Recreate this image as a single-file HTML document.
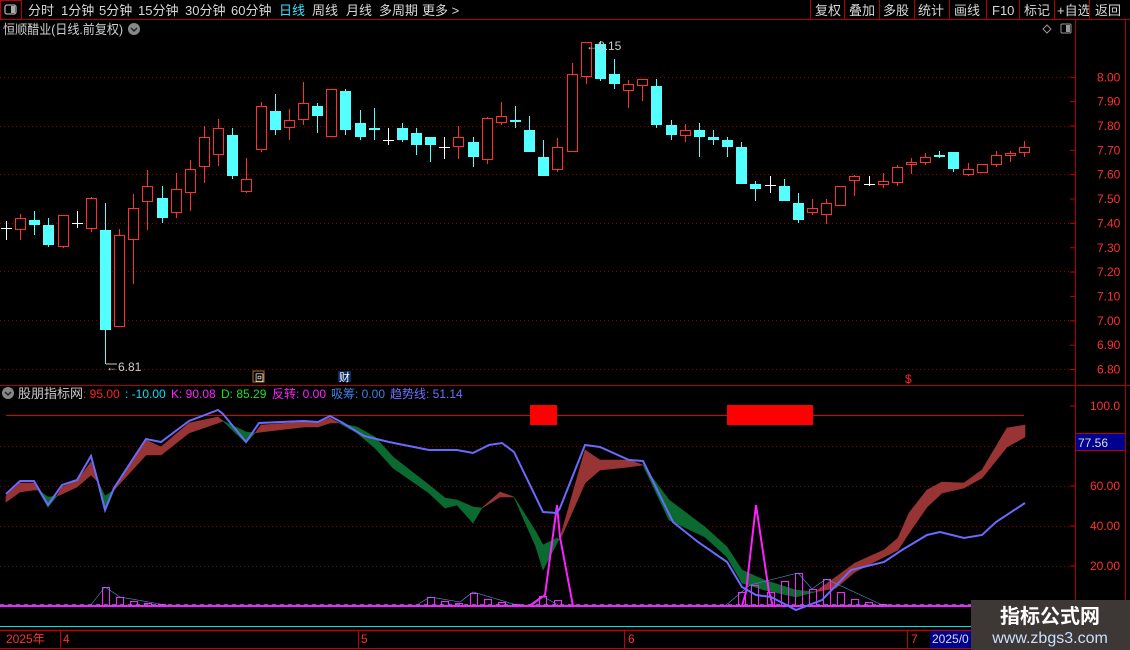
<!DOCTYPE html>
<html><head><meta charset="utf-8"><style>
body{margin:0;width:1130px;height:650px;background:#000;overflow:hidden;font-family:"Liberation Sans","Noto Sans CJK SC",sans-serif;}
svg{position:absolute;left:0;top:0}
.t{font-family:"Liberation Sans","Noto Sans CJK SC",sans-serif;}
</style></head><body>
<svg id="s" width="1130" height="650" xmlns="http://www.w3.org/2000/svg">
<rect width="1130" height="650" fill="#000"/>
<line x1="0" y1="19.5" x2="1130" y2="19.5" stroke="#b00000"/>
<rect x="0.5" y="0.5" width="21" height="19" fill="none" stroke="#c00000"/>
<rect x="5" y="5" width="11" height="9" rx="2" fill="none" stroke="#aaa" stroke-width="1.3"/><rect x="11" y="6" width="4" height="7" fill="#aaa"/>
<g class="t" font-size="13" fill="#d8d8d8">
<text x="28" y="15">分时</text><text x="61" y="15">1分钟</text><text x="99" y="15">5分钟</text><text x="138" y="15">15分钟</text><text x="185" y="15">30分钟</text><text x="231" y="15">60分钟</text>
<text x="279" y="15" fill="#40e0ff">日线</text><text x="312" y="15">周线</text><text x="346" y="15">月线</text><text x="379" y="15">多周期</text><text x="422" y="15">更多 &gt;</text>
<text x="815" y="15">复权</text><text x="849" y="15">叠加</text><text x="883" y="15">多股</text><text x="918" y="15">统计</text><text x="954" y="15">画线</text><text x="992" y="15">F10</text><text x="1024" y="15">标记</text><text x="1057" y="15">+自选</text><text x="1095" y="15">返回</text>
</g>
<g stroke="#b00000"><line x1="810.5" y1="0" x2="810.5" y2="19"/><line x1="844.5" y1="0" x2="844.5" y2="19"/><line x1="879.5" y1="0" x2="879.5" y2="19"/><line x1="914.5" y1="0" x2="914.5" y2="19"/><line x1="949.5" y1="0" x2="949.5" y2="19"/><line x1="986.5" y1="0" x2="986.5" y2="19"/><line x1="1019.5" y1="0" x2="1019.5" y2="19"/><line x1="1054.5" y1="0" x2="1054.5" y2="19"/><line x1="1089.5" y1="0" x2="1089.5" y2="19"/>
<line x1="1075.5" y1="19" x2="1075.5" y2="630"/><line x1="1125.5" y1="19" x2="1125.5" y2="630"/>
<line x1="0" y1="385.5" x2="1075" y2="385.5"/><line x1="1075" y1="385.5" x2="1130" y2="385.5"/>
</g>
<text x="3" y="34" class="t" font-size="13" fill="#d0d0d0" textLength="120" lengthAdjust="spacingAndGlyphs">恒顺醋业(日线.前复权)</text>
<circle cx="134" cy="29" r="6" fill="#888"/><path d="M131 28l3 3 3-3" stroke="#222" fill="none" stroke-width="1.5"/>
<path d="M1047 25l4 4-4 4-4-4z" fill="none" stroke="#999"/>
<rect x="1061" y="24" width="10" height="9" rx="1" fill="none" stroke="#999"/><rect x="1066" y="25" width="4" height="7" fill="#999"/>
<g id="grid" stroke="#8a0000" stroke-dasharray="1 3"></g>
<g id="axis" class="t" font-size="12" fill="#ff3030"></g>
<g id="candles"></g>
<text x="586" y="50" class="t" font-size="12" fill="#ccc">←8.15</text>
<line x1="106" y1="364" x2="117" y2="364" stroke="#ccc"/><text x="106" y="371" class="t" font-size="12" fill="#ccc">←6.81</text>
<rect x="253" y="371" width="11" height="11" fill="#000" stroke="#c07020"/><text x="255" y="381" font-size="9" fill="#fff">回</text>
<rect x="338" y="371" width="13" height="11" fill="#0a2a60"/><text x="339" y="381" class="t" font-size="11" fill="#fff">财</text>
<text x="905" y="383" class="t" font-size="12" fill="#ff2020">$</text>
<circle cx="8" cy="393" r="6" fill="#888"/><path d="M5 392l3 3 3-3" stroke="#222" fill="none" stroke-width="1.5"/>
<text y="398" class="t" font-size="12"><tspan x="18" fill="#ccc" font-size="13">股朋指标网</tspan><tspan x="83" fill="#ff2020">: 95.00</tspan><tspan x="125" fill="#00e0ff">: -10.00</tspan><tspan x="171" fill="#ff20ff">K: 90.08</tspan><tspan x="221" fill="#20e020">D: 85.29</tspan><tspan x="272" fill="#ff20ff">反转: 0.00</tspan><tspan x="331" fill="#4080e0">吸筹: 0.00</tspan><tspan x="390" fill="#7070ff">趋势线: 51.14</tspan></text>
<g id="ind"></g>
<rect x="1076" y="434" width="49" height="16" fill="#000090"/>
<line x1="1076" y1="433.5" x2="1125" y2="433.5" stroke="#c00000"/><line x1="1076" y1="450.5" x2="1125" y2="450.5" stroke="#c00000"/>
<text x="1078" y="447" class="t" font-size="12" fill="#ddd">77.56</text>
<line x1="0" y1="626.5" x2="1075" y2="626.5" stroke="#00e0e0"/>
<line x1="0" y1="630.5" x2="1130" y2="630.5" stroke="#c00000" stroke-width="1.5"/>
<line x1="0" y1="648.5" x2="1130" y2="648.5" stroke="#c00000"/>
<g stroke="#c00000"><line x1="60.5" y1="630" x2="60.5" y2="648"/><line x1="358.5" y1="630" x2="358.5" y2="648"/><line x1="624.5" y1="630" x2="624.5" y2="648"/><line x1="907.5" y1="630" x2="907.5" y2="648"/></g>
<g class="t" font-size="12" fill="#ff3030"><text x="6" y="643">2025年</text><text x="63" y="643">4</text><text x="361" y="643">5</text><text x="628" y="643">6</text><text x="911" y="643">7</text></g>
<rect x="930" y="631" width="45" height="17" fill="#000090"/><text x="932" y="643" class="t" font-size="12" fill="#ddd">2025/0</text>
<rect x="971" y="600" width="159" height="50" fill="#3d3735"/>
<text x="1050" y="623" text-anchor="middle" class="t" font-size="20" font-weight="bold" fill="#fff">指标公式网</text>
<text x="1050" y="643" text-anchor="middle" class="t" font-size="16" fill="#c8e0ff">www.zbgs3.com</text>
</svg>
<script>
var NS="http://www.w3.org/2000/svg";
function el(p,t,a){var e=document.createElementNS(NS,t);for(var k in a)e.setAttribute(k,a[k]);document.getElementById(p).appendChild(e);return e;}
[77,126,174,223,271,320,369].forEach(function(y){el("grid","line",{x1:0,y1:y+.5,x2:1075,y2:y+.5});});
[446,486,526,566].forEach(function(y){el("grid","line",{x1:0,y1:y+.5,x2:1075,y2:y+.5});});
var labs=["8.00","7.90","7.80","7.70","7.60","7.50","7.40","7.30","7.20","7.10","7.00","6.90","6.80"];
labs.forEach(function(l,i){var y=77.3+i*24.35;el("axis","line",{x1:1070,y1:y,x2:1076,y2:y,stroke:"#c00000"});var t=el("axis","text",{x:1097,y:y+4});t.textContent=l;});
[[406,"100.0"],[486,"60.00"],[526,"40.00"],[566,"20.00"]].forEach(function(a){el("axis","line",{x1:1070,y1:a[0],x2:1076,y2:a[0],stroke:"#c00000"});var t=el("axis","text",{x:1090,y:a[0]+4});t.textContent=a[1];});
var C=[["w",228,228,221,240],["r",218,230,214,240],["c",220,225,211,235],["c",225,245,218,247],["r",215,247,215,248],["w",223,223,211,228],["r",198,229,197,232],["c",230,330,203,364],["r",235,327,229,327],["r",208,240,194,284],["r",186,202,170,230],["c",198,218,186,223],["r",189,213,173,218],["r",169,193,160,211],["r",137,167,126,183],["r",128,155,119,166],["c",135,176,128,179],["r",179,192,158,193],["r",106,150,102,152],["c",111,130,94,135],["r",120,128,109,140],["r",103,120,82,125],["c",106,116,103,133],["r",89,137,89,137],["c",91,130,89,135],["c",123,137,110,140],["c",128,130,108,140],["w",140,140,128,145],["c",128,140,123,142],["c",133,145,128,155],["c",137,145,137,162],["w",147,147,137,159],["r",137,147,126,159],["c",142,157,137,167],["r",118,160,117,164],["r",116,123,102,125],["c",120,122,106,128],["c",130,152,116,152],["c",157,176,140,176],["r",147,170,138,172],["r",74,152,63,152],["r",42,77,42,84],["c",44,79,41,81],["c",74,84,59,89],["r",84,91,80,108],["r",79,86,79,101],["c",86,125,79,128],["c",125,135,120,140],["r",130,136,124,142],["c",130,137,123,157],["c",137,140,130,145],["c",140,147,137,157],["c",147,184,142,184],["c",184,189,181,201],["w",185,185,176,193],["c",186,201,179,201],["c",203,220,193,223],["r",208,213,199,215],["r",203,215,199,224],["r",186,206,186,206],["r",176,181,175,196],["w",184,184,176,186],["r",181,185,173,188],["r",167,183,165,186],["r",162,165,158,174],["r",157,163,153,165],["c",155,157,151,158],["c",152,169,152,172],["r",169,175,163,176],["r",164,173,164,173],["r",155,165,151,167],["r",153,156,151,162],["r",147,153,141,157]];
C.forEach(function(c,i){var x=Math.round(6+i*14.14);var col=c[0]=="r"?"#ff3030":c[0]=="c"?"#54ffff":"#ffffff";
el("candles","line",{x1:x+.5,y1:c[3],x2:x+.5,y2:c[4],stroke:col});
if(c[0]=="w"){el("candles","line",{x1:x-5,y1:c[1]+.5,x2:x+6,y2:c[1]+.5,stroke:col});}
else if(c[0]=="c"){el("candles","rect",{x:x-5,y:c[1],width:11,height:Math.max(2,c[2]-c[1]),fill:col});}
else{el("candles","rect",{x:x-4.5,y:c[1]+.5,width:10,height:Math.max(1,c[2]-c[1]-1),fill:"#000",stroke:col});}
});
el("ind","line",{x1:6,y1:415.5,x2:1024,y2:415.5,stroke:"#e00000"});
el("ind","rect",{x:530,y:405,width:27,height:20,fill:"#ff0000"});
el("ind","rect",{x:727,y:405,width:86,height:20,fill:"#ff0000"});
var B=[[6,496,502],[20,483,492],[34,483,490],[38,490,490],[48,507,497],[57,496,496],[62,487,494],[77,481,487],[91,462,475],[98,482,482],[105,512,496],[114,490,490],[146,440,455],[161,447,455],[189,423,433],[218,417,423],[223,421,421],[246,443,432],[255,433,433],[261,425,432],[304,422,427],[318,423,427],[330,418,423],[339,423,423],[357,433,427],[375,448,437],[393,468,457],[429,493,485],[445,508,498],[457,505,500],[473,523,507],[482,508,508],[500,492,497],[514,497,497],[536,547,532],[543,570,545],[557,543,538],[560,538,540],[585,450,483],[600,460,470],[629,460,467],[643,465,465],[669,520,500],[705,537,527],[727,557,547],[742,583,570],[764,590,580],[796,597,590],[815,592,592],[836,577,588],[855,563,572],[884,550,557],[898,538,550],[909,513,533],[927,490,507],[942,482,493],[964,483,488],[982,470,478],[1007,428,447],[1025,425,437]];
for(var i=0;i<B.length-1;i++){var a=B[i],b=B[i+1];var s=(a[1]-a[2])+(b[1]-b[2]);var col=s<0?"#983434":"#0b6a30";
el("ind","polygon",{points:a[0]+","+a[1]+" "+b[0]+","+b[1]+" "+b[0]+","+b[2]+" "+a[0]+","+a[2],fill:col,stroke:col,"stroke-width":0.6});}
var H=[[102,587],[116,597],[130,601],[144,603],[158,604],[427,597],[441,601],[455,603],[470,593],[484,599],[498,602],[512,604],[539,596],[554,600],[738,592],[751,585],[767,592],[781,581],[795,573],[809,589],[823,579],[837,592],[851,599],[865,602],[879,604]];
H.forEach(function(h){el("ind","rect",{x:h[0]+.5,y:h[1]+.5,width:7,height:606-h[1],fill:"none",stroke:"#ff20ff"});});
[[[90,606],[105,587],[120,597],[160,604],[170,606]],[[415,606],[430,597],[460,602],[473,592],[520,606]],[[528,606],[542,596],[560,606]],[[725,606],[750,585],[798,573],[812,589],[826,579],[880,604],[895,606]]].forEach(function(p){el("ind","polyline",{points:p.map(function(q){return q.join(",")}).join(" "),fill:"none",stroke:"#4aa0e0","stroke-width":0.6});});
el("ind","line",{x1:0,y1:606,x2:1075,y2:606,stroke:"#ff20ff","stroke-width":2});
el("ind","line",{x1:0,y1:604.5,x2:1075,y2:604.5,stroke:"#4aa0e0","stroke-width":0.8,"stroke-dasharray":"4 4"});
el("ind","polyline",{points:"530,606 545,595 557,505 560,537 573,606 742,606 746,592 756,505 769,592 773,606",fill:"none",stroke:"#ff20ff","stroke-width":2});
var L=[[6,494],[20,481],[34,481],[48,505],[62,485],[77,480],[91,456],[98,482],[105,510],[114,488],[146,439],[161,442],[189,421],[218,410],[223,414],[246,442],[259,423],[304,421],[318,422],[330,416],[343,423],[364,436],[389,442],[429,450],[457,450],[473,453],[489,445],[502,443],[514,452],[543,512],[557,513],[560,508],[585,445],[600,447],[629,460],[643,461],[673,522],[698,542],[727,562],[742,587],[756,595],[771,597],[796,610],[822,600],[851,570],[884,562],[902,550],[927,535],[940,532],[964,538],[982,535],[996,522],[1025,503]];
el("ind","polyline",{points:L.map(function(q){return q.join(",")}).join(" "),fill:"none",stroke:"#6a6aff","stroke-width":2});
</script>
</body></html>
